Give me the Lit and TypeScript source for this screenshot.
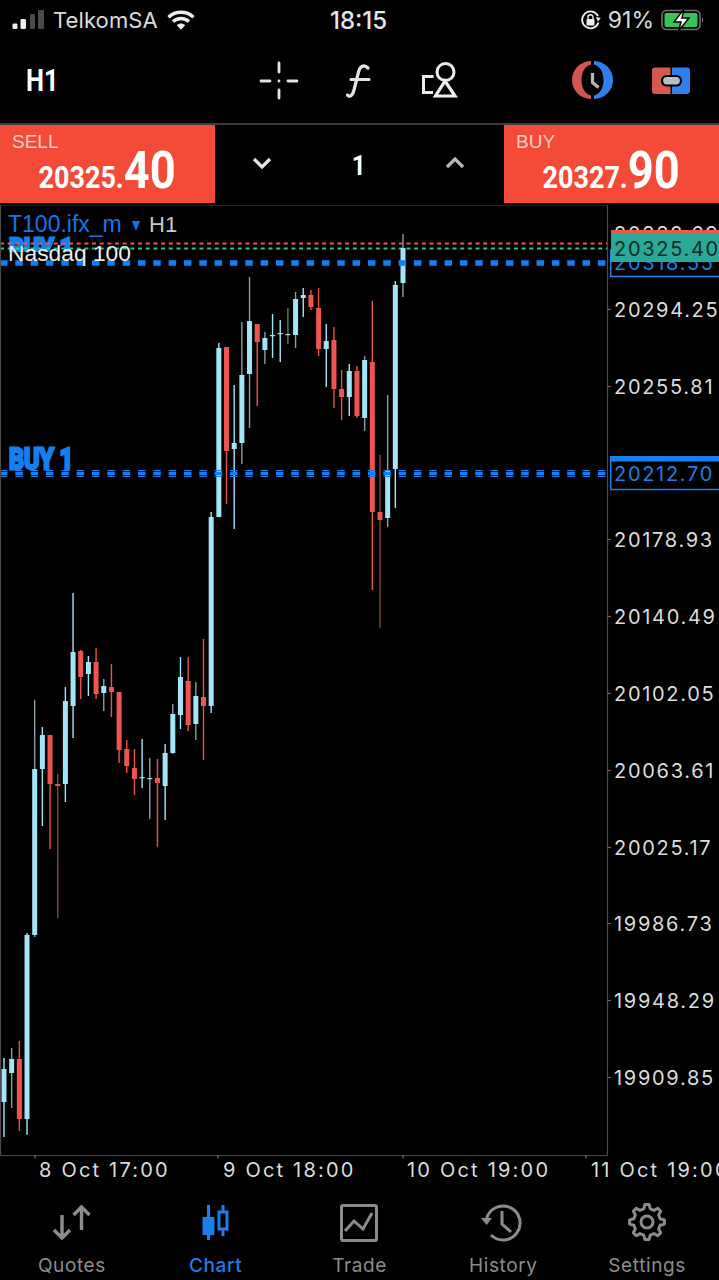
import { LitElement, html, svg, css } from "lit";
import { customElement } from "lit/decorators.js";

type C = [number, number, number, number, string];
const CANDLES: C[] = [
  [1058,1137,1069,1102,"b"],[1048,1108,1059,1073,"bd"],[1041,1131,1059,1119,"r"],[933,1135,935,1119,"b"],
  [700,937,769,935,"bd"],[727,826,735,769,"b"],[735,849,735,784,"r"],[774,918,784,786,"rd"],
  [687,802,701,784,"b"],[593,738,652,706,"b"],[650,699,651,677,"r"],[656,696,662,674,"b"],
  [648,699,662,694,"r"],[679,711,686,693,"bd"],[664,717,687,692,"r"],[692,763,692,750,"r"],
  [740,773,749,766,"r"],[749,795,768,779,"r"],[739,788,777,778,"b"],[758,819,778,779,"bd"],
  [759,847,778,783,"r"],[744,820,753,786,"b"],[704,754,714,753,"bd"],[657,729,677,715,"b"],
  [657,731,681,725,"r"],[682,740,696,724,"bd"],[639,760,697,706,"r"],[512,713,517,706,"b"],
  [343,517,348,517,"b"],[347,504,347,451,"r"],[385,529,443,449,"b"],[322,464,375,443,"bd"],
  [277,428,321,374,"bd"],[324,406,324,342,"r"],[332,364,338,350,"bd"],[314,358,335,336,"b"],
  [320,362,333,334,"b"],[308,344,334,335,"g"],[292,348,299,335,"bd"],[288,317,295,298,"b"],
  [290,310,295,307,"r"],[288,356,308,349,"r"],[324,387,341,349,"b"],[327,408,340,389,"r"],
  [370,420,389,397,"r"],[364,416,371,397,"b"],[366,418,371,416,"r"],[356,431,360,418,"bd"],
  [301,590,362,512,"r"],[455,628,512,520,"rd"],[395,527,470,518,"bd"],[281,508,285,469,"b"],
  [234,297,248,283,"bd"],
];
const WICK: Record<string,string> = { b:"#a4e4f8", bd:"#8a9ea6", r:"#e8524c", rd:"#8c4240", g:"#5f7a6c" };
const PRICES: [string, number][] = [
  ["20294.25",317],["20255.81",394],["20178.93",547],["20140.49",624],["20102.05",701],
  ["20063.61",778],["20025.17",855],["19986.73",931],["19948.29",1008],["19909.85",1085],
];
const TIMES: [string, number, number][] = [
  ["8 Oct 17:00",39,35],["9 Oct 18:00",223,218],["10 Oct 19:00",407,403],["11 Oct 19:00",591,586],
];

function gearPath(cx: number, cy: number): string {
  const teeth = 8, ro = 17.5, ri = 13.5;
  const pts: string[] = [];
  for (let i = 0; i < teeth; i++) {
    const a = (i * 2 * Math.PI) / teeth - Math.PI / 2;
    const s = Math.PI / teeth;
    for (const [r, d] of [[ri, -0.62], [ro, -0.3], [ro, 0.3], [ri, 0.62]] as [number, number][]) {
      const t = a + d * s;
      pts.push(`${(cx + r * Math.cos(t)).toFixed(1)} ${(cy + r * Math.sin(t)).toFixed(1)}`);
    }
  }
  return "M" + pts.join("L") + "Z";
}

@customElement("app-root")
export class AppRoot extends LitElement {
  static styles = css`
    :host { display: block; width: 719px; height: 1280px; background: #000; overflow: hidden; color: #fff; font-family: Inter, "Liberation Sans", sans-serif; }
    svg { display: block; }
    .status { height: 40px; display: flex; align-items: center; padding: 0 14px 0 12px; font-size: 22px; color: #dcdcdc; }
    .status-left { flex: 1 1 0; display: flex; align-items: center; gap: 9px; }
    .carrier { letter-spacing: 0.1px; }
    .clock { font-weight: 500; font-size: 24px; color: #e6e6e6; }
    .status-right { flex: 1 1 0; display: flex; justify-content: flex-end; align-items: center; gap: 7px; }
    .pct { font-size: 23px; }
    .toolbar { height: 85px; display: flex; align-items: center; border-bottom: 2px solid #3c3c3c; padding-bottom: 2px; box-sizing: border-box; }
    .tf { width: 92px; padding-left: 26px; box-sizing: border-box; font: 700 31px Roboto, sans-serif; }
    .tf span { display: inline-block; transform: scaleX(.82); transform-origin: left center; }
    .tool-strip { display: block; }
    .quote { height: 78px; display: flex; }
    .side { width: 215px; background: #f44a38; box-sizing: border-box; padding: 7px 39px 0 12px; display: flex; flex-direction: column; }
    .side-label { font: 19px "Liberation Sans", sans-serif; color: #f9cfc6; line-height: 20px; }
    .price { align-self: flex-end; margin-top: -10px; transform: scaleX(.87); transform-origin: right bottom; white-space: nowrap; font: 700 31px/58px Roboto, sans-serif; height: 58px; }
    .price b { font-size: 52px; font-weight: 700; }
    .lots { flex: 1; display: flex; align-items: center; justify-content: space-between; padding: 0 38px 2px 36px; }
    .lot-num { font: 700 27px Roboto, sans-serif; transform: scaleX(.9); margin-top: 5px; }
    .chart-gap { height: 2px; }
    .tabs { height: 85px; display: grid; grid-template-columns: repeat(5, 1fr); }
    .tab { display: flex; flex-direction: column; align-items: center; color: #8c8c8c; font-size: 19px; letter-spacing: .6px; }
    .tab.on { color: #1a7fe8; font-weight: 500; }
    .tab svg { margin-bottom: 9px; }
    .axis { font: 400 20px Inter, sans-serif; letter-spacing: 1.7px; fill: #dcdcdc; }
    .axis-time { letter-spacing: 2.2px; }
    .axis-dark { fill: #0d2a28; }
    .axis-blue { fill: #1a7fe8; }
    .sym { font: 23px "Liberation Sans", sans-serif; fill: #1077e6; }
    .h1-lbl { font: 22px "Liberation Sans", sans-serif; fill: #c8c8c8; }
    .nas { font: 22.8px "Liberation Sans", sans-serif; fill: #eee; }
    .order { font: 700 30px Roboto, sans-serif; fill: #1480f0; stroke: #1480f0; stroke-width: 3px; }
  `;

  private chart() {
    return svg`
      <svg width="719" height="990" viewBox="0 205 719 990">
        <defs><clipPath id="top-order"><rect x="0" y="230" width="200" height="22"></rect></clipPath></defs>
        <g clip-path="url(#top-order)"><text class="order" transform="translate(9,259) scale(.78,1)">BUY 1</text></g>
        <text class="order" transform="translate(9,469) scale(.78,1)">BUY 1</text>
        <path d="M0 243.500H607" stroke="#f0564c" stroke-width="2" stroke-dasharray="4 3.670"></path>
        <path d="M0 248.500H607" stroke="#1fc796" stroke-width="2" stroke-dasharray="4 3.670"></path>
        ${CANDLES.map((c, i) => {
          const x = 4 + i * 7.673;
          const base = c[4][0] === "r" ? "#ee5550" : "#a4e4f8";
          return svg`
            <rect x=${x - 0.7} y=${c[0]} width="1.4" height=${c[1] - c[0]} fill=${WICK[c[4]]}></rect>
            <rect x=${x - 2.5} y=${c[2]} width="5" height=${Math.max(c[3] - c[2], 1.2)} fill=${base}></rect>`;
        })}
        <path d="M0 263H607" stroke="#0f80f5" stroke-width="5.500" stroke-dasharray="7.500 7.830"></path>
        <g stroke-dasharray="7.500 7.830">
          <path d="M0 470.500H607" stroke="#1a7fe8" stroke-width="1.200"></path>
          <path d="M0 473.500H607" stroke="#0f80f5" stroke-width="3.600"></path>
          <path d="M0 476.500H607" stroke="#1a7fe8" stroke-width="1.200"></path>
        </g>
        <path d="M.5 205V1155.500H607.500V205H0" fill="none" stroke="#4a4a4a" stroke-width="1.200"></path>
        ${TIMES.map(t => svg`<path d="M${t[2]} 1155V1158.500" stroke="#777" stroke-width="1.200"></path>
          <text class="axis axis-time" x=${t[1]} y="1177">${t[0]}</text>`)}
        ${PRICES.map(p => svg`<path d="M607 ${p[1] - 7.5}H611" stroke="#666" stroke-width="1.200"></path>
          <text class="axis" x="614" y=${p[1]}>${p[0]}</text>`)}
        <text class="axis" x="614" y="241">20332.69</text>
        <rect x="610.700" y="250" width="110" height="26.500" fill="#000" stroke="#2a84e8" stroke-width="1.500"></rect>
        <text class="axis axis-blue" x="614" y="270">20318.55</text>
        <rect x="611" y="230" width="108" height="4.500" fill="#ea5a4c"></rect>
        <rect x="611" y="234" width="108" height="28" fill="#2aa898"></rect>
        <text class="axis axis-dark" x="614" y="256">20325.40</text>
        <rect x="610.700" y="458.500" width="110" height="31" fill="#000" stroke="#1480f0" stroke-width="1.500"></rect>
        <rect x="610" y="456" width="109" height="5.500" fill="#1480f0"></rect>
        <text class="axis axis-blue" x="614" y="481">20212.70</text>
        <text class="sym" x="8" y="232">T100.ifx_m</text>
        <path d="M132 221H140L136 231Z" fill="#1077e6"></path>
        <text class="h1-lbl" x="149" y="232">H1</text>
        <text class="nas" x="8" y="261">Nasdaq 100</text>
      </svg>`;
  }

  render() {
    const act = "#1a7fe8", gr = "#8c8c8c";
    return html`
      <div class="status">
        <div class="status-left">
          <svg width="32" height="22" viewBox="0 0 32 22">
            <rect x=".5" y="14.500" width="5" height="5.500" rx="1.300" fill="#eee"></rect>
            <rect x="8.500" y="10" width="5.500" height="10" rx="1.300" fill="#eee"></rect>
            <rect x="18" y="5" width="5" height="15" rx="1.300" fill="#4a4a4a"></rect>
            <rect x="26" y="1" width="6" height="19" rx="1.300" fill="#4a4a4a"></rect>
          </svg>
          <span class="carrier">TelkomSA</span>
          <svg width="28" height="22" viewBox="0 0 28 22">
            <path d="M1.500 8.200C8.500 1.600 19.500 1.600 26.500 8.200M6 12.600C10.500 8.400 17.500 8.400 22 12.600" fill="none" stroke="#eee" stroke-width="3.400"></path>
            <path d="M9.800 16.200C12.300 14 15.700 14 18.200 16.200L14 20.800Z" fill="#eee"></path>
          </svg>
        </div>
        <span class="clock">18:15</span>
        <div class="status-right">
          <svg width="21" height="22" viewBox="0 0 21 22">
            <path d="M18.500 13.500A8.400 8.400 0 1 1 18 7" fill="none" stroke="#eee" stroke-width="1.800"></path>
            <path d="M15.500 8.500H20.500L18.500 12.500Z" fill="#eee" transform="rotate(10 18 10)"></path>
            <rect x="6.500" y="10" width="8" height="6.500" rx="1" fill="#eee"></rect>
            <path d="M8 10V8.200A2.500 2.500 0 0 1 13 8.200V10" fill="none" stroke="#eee" stroke-width="1.400"></path>
          </svg>
          <span class="pct">91%</span>
          <svg width="44" height="24" viewBox="0 0 44 24">
            <rect x="1" y="2.500" width="38" height="19" rx="4.500" fill="none" stroke="#6e6e6e" stroke-width="1.600"></rect>
            <rect x="3.500" y="5" width="33" height="14" rx="2" fill="#36c455"></rect>
            <path d="M41 9C42.600 9.500 42.600 14.500 41 15Z" fill="#6e6e6e"></path>
            <path d="M23 1L13 14H20L17.500 23L28 10H21Z" fill="#fff" stroke="#000" stroke-width="1.500"></path>
          </svg>
        </div>
      </div>
      <div class="toolbar">
        <div class="tf"><span>H1</span></div>
        <svg class="tool-strip" width="627" height="81" viewBox="92 40 627 81">
          <g stroke="#e4e4e4" stroke-width="2.800" stroke-linecap="round" fill="none">
            <path d="M261 81H270M288 81H297M279 63V72M279 90V98"></path>
            <path d="M279 81h.01"></path>
            <path d="M368 68C364 64 360 66 358.500 72L354 90C352.500 96 349.500 97.500 347.500 95M351 79.500H369" stroke-width="3.200"></path>
          </g>
          <g stroke="#eee" stroke-width="3" fill="none">
            <circle cx="445.500" cy="72" r="8.500"></circle>
            <path d="M445 81L435.500 96H455Z" stroke-width="3.200"></path>
            <path d="M433.500 76.500H423.500V92.500H433"></path>
          </g>
          <path d="M591 61A19 19 0 0 0 591 99V95.500C585 94 581.500 88 581.500 80C581.500 72 585 66 591 64.500Z" fill="#d2564f"></path>
          <path d="M594 61A19 19 0 0 1 594 99V95.500C600 94 603.500 88 603.500 80C603.500 72 600 66 594 64.500Z" fill="#2f80ee"></path>
          <path d="M592.500 73V82.500L598.500 87.500" fill="none" stroke="#b8b8b8" stroke-width="3.200"></path>
          <path d="M670.500 67.500H655.500A3 3 0 0 0 652 71V91A3 3 0 0 0 655 94H670.500Z" fill="#d8574f"></path>
          <path d="M672 67.500H686.500A3 3 0 0 1 690 71V91A3 3 0 0 1 686.500 94H672Z" fill="#2f80ee"></path>
          <rect x="662" y="76" width="19" height="9.500" rx="4.700" fill="#b5c0c4" stroke="#000" stroke-width="2.200"></rect>
        </svg>
      </div>
      <div class="quote">
        <div class="side">
          <span class="side-label">SELL</span>
          <span class="price">20325.<b>40</b></span>
        </div>
        <div class="lots">
          <svg width="22" height="14" viewBox="0 0 22 14"><path d="M3 3L11 11L19 3" fill="none" stroke="#e6e6e6" stroke-width="3.200"></path></svg>
          <span class="lot-num">1</span>
          <svg width="22" height="14" viewBox="0 0 22 14"><path d="M3 11L11 3L19 11" fill="none" stroke="#b8b8b8" stroke-width="3.200"></path></svg>
        </div>
        <div class="side">
          <span class="side-label">BUY</span>
          <span class="price">20327.<b>90</b></span>
        </div>
      </div>
      <div class="chart-gap"></div>
      ${this.chart()}
      <div class="tabs">
        <div class="tab">
          <svg width="44" height="50" viewBox="49 1195 44 50">
            <path d="M61 1215V1238M53 1230L61 1238L69 1230M80.500 1230V1207M72.500 1215L80.500 1207L88.500 1215" fill="none" stroke=${gr} stroke-width="3.400"></path>
          </svg>
          <span>Quotes</span>
        </div>
        <div class="tab on">
          <svg width="44" height="50" viewBox="193 1195 44 50">
            <rect x="206" y="1205" width="3" height="35" fill=${act}></rect>
            <rect x="201.500" y="1217" width="12" height="18" rx="1" fill=${act}></rect>
            <rect x="220.500" y="1205" width="3" height="31" fill=${act}></rect>
            <rect x="218" y="1212" width="8" height="17" fill="#000" stroke=${act} stroke-width="3"></rect>
          </svg>
          <span>Chart</span>
        </div>
        <div class="tab">
          <svg width="44" height="50" viewBox="337 1195 44 50">
            <rect x="341.500" y="1205.500" width="35" height="35" rx="1.500" fill="none" stroke=${gr} stroke-width="3"></rect>
            <path d="M345 1231L354 1221L363 1229L372 1213" fill="none" stroke=${gr} stroke-width="3"></path>
          </svg>
          <span>Trade</span>
        </div>
        <div class="tab">
          <svg width="44" height="50" viewBox="481 1195 44 50">
            <path d="M486.500 1219A17 17 0 1 1 491 1235" fill="none" stroke=${gr} stroke-width="3"></path>
            <path d="M481 1218H492L486.500 1225Z" fill=${gr}></path>
            <path d="M502 1211V1224L511 1232" fill="none" stroke=${gr} stroke-width="3"></path>
          </svg>
          <span>History</span>
        </div>
        <div class="tab">
          <svg width="44" height="50" viewBox="624 1195 44 50">
            <path d=${gearPath(646, 1222)} fill="none" stroke=${gr} stroke-width="3" stroke-linejoin="round"></path>
            <circle cx="646" cy="1222" r="6" fill="none" stroke=${gr} stroke-width="3"></circle>
          </svg>
          <span>Settings</span>
        </div>
      </div>
    `;
  }
}
